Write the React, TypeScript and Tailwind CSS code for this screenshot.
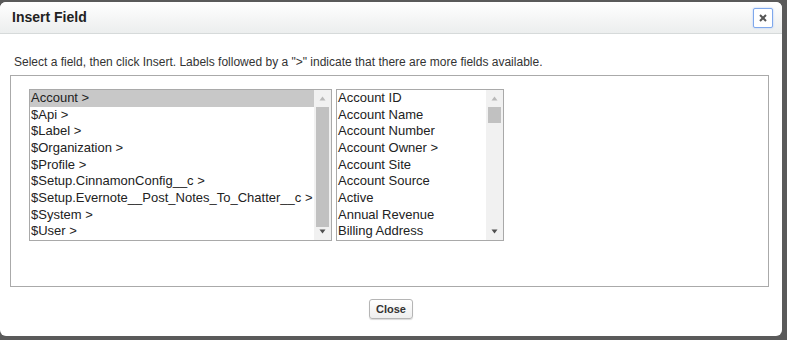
import React from "react";

/* data */
const objects = [
  "Account >",
  "$Api >",
  "$Label >",
  "$Organization >",
  "$Profile >",
  "$Setup.CinnamonConfig__c >",
  "$Setup.Evernote__Post_Notes_To_Chatter__c >",
  "$System >",
  "$User >",
];

const fields = [
  "Account ID",
  "Account Name",
  "Account Number",
  "Account Owner >",
  "Account Site",
  "Account Source",
  "Active",
  "Annual Revenue",
  "Billing Address",
];

/* fake scrollbar, like the native one in the shot */
const Scrollbar = ({ thumbTop, thumbHeight }: { thumbTop: number; thumbHeight: number }) => (
  <div className="relative w-[17px] h-full bg-[#f1f1f1] shrink-0">
    <svg className="absolute left-[5px] top-[6px]" width="7" height="5" viewBox="0 0 7 5">
      <path d="M3.5 0.5 L6.5 4.5 L0.5 4.5 Z" fill="#b9b9b9" />
    </svg>
    <div
      className="absolute left-[2px] w-[13px] bg-[#c1c1c1]"
      style={{ top: thumbTop, height: thumbHeight }}
    />
    <svg className="absolute left-[5px] bottom-[6px]" width="7" height="5" viewBox="0 0 7 5">
      <path d="M0.5 0.5 L6.5 0.5 L3.5 4.5 Z" fill="#505050" />
    </svg>
  </div>
);

const ListBox = ({
  items,
  width,
  selected,
  thumbTop,
  thumbHeight,
}: {
  items: string[];
  width: string;
  selected?: number;
  thumbTop: number;
  thumbHeight: number;
}) => (
  <div className={`flex h-[152px] border border-[#a9a9a9] bg-white ${width}`}>
    <div className="flex-1 flex flex-col overflow-hidden">
      {items.map((it, i) => (
        <div
          key={it}
          className={`h-[16.66px] leading-[16.66px] pl-[1px] text-[13px] text-[#222] whitespace-nowrap ${
            i === selected ? "bg-[#c8c8c8]" : ""
          }`}
        >
          {it}
        </div>
      ))}
    </div>
    <Scrollbar thumbTop={thumbTop} thumbHeight={thumbHeight} />
  </div>
);

export default function App() {
  return (
    <div
      className="w-[787px] h-[340px] bg-[#5a5a5a] pt-[2px]"
      style={{ fontFamily: '"Liberation Sans", Arial, sans-serif' }}
    >
      <div className="w-[782px] h-[334px] bg-white rounded-[6px] overflow-hidden flex flex-col">
        {/* Header */}
        <div className="h-[32px] shrink-0 flex items-center justify-between pl-[12px] pr-[9px] bg-gradient-to-b from-white to-[#eceeee] border-b border-[#d6dada]">
          <h2 className="text-[14px] font-bold text-[#222]">Insert Field</h2>
          <button className="w-[20px] h-[20px] flex items-center justify-center bg-white border border-[#7fa8ec] rounded-[2px] shadow-[0_0_2px_#a9c6f5]">
            <svg width="8" height="8" viewBox="0 0 8 8">
              <path d="M1 1 L7 7 M7 1 L1 7" stroke="#555" strokeWidth="2" />
            </svg>
          </button>
        </div>

        {/* Body */}
        <div className="px-[10px] pt-[21px]">
          <p className="text-[12px] leading-[14px] text-[#333] pl-[4px]">
            Select a field, then click Insert. Labels followed by a "&gt;" indicate that there are more fields available.
          </p>
          <div className="mt-[6px] w-[759px] h-[212px] border border-[#aaa] pl-[18px] pt-[13px]">
            <div className="flex gap-[4px]">
              <ListBox items={objects} width="w-[303px]" selected={0} thumbTop={17} thumbHeight={120} />
              <ListBox items={fields} width="w-[168px]" thumbTop={17} thumbHeight={16} />
            </div>
          </div>
        </div>

        {/* Footer */}
        <div className="flex justify-center pt-[12px]">
          <button className="h-[20px] px-[6px] text-[11px] font-bold text-[#333] bg-gradient-to-b from-white to-[#eeeeee] border border-[#b5b5b5] rounded-[3px] shadow-[0_1px_1px_rgba(0,0,0,0.15)]">
            Close
          </button>
        </div>
      </div>
    </div>
  );
}
